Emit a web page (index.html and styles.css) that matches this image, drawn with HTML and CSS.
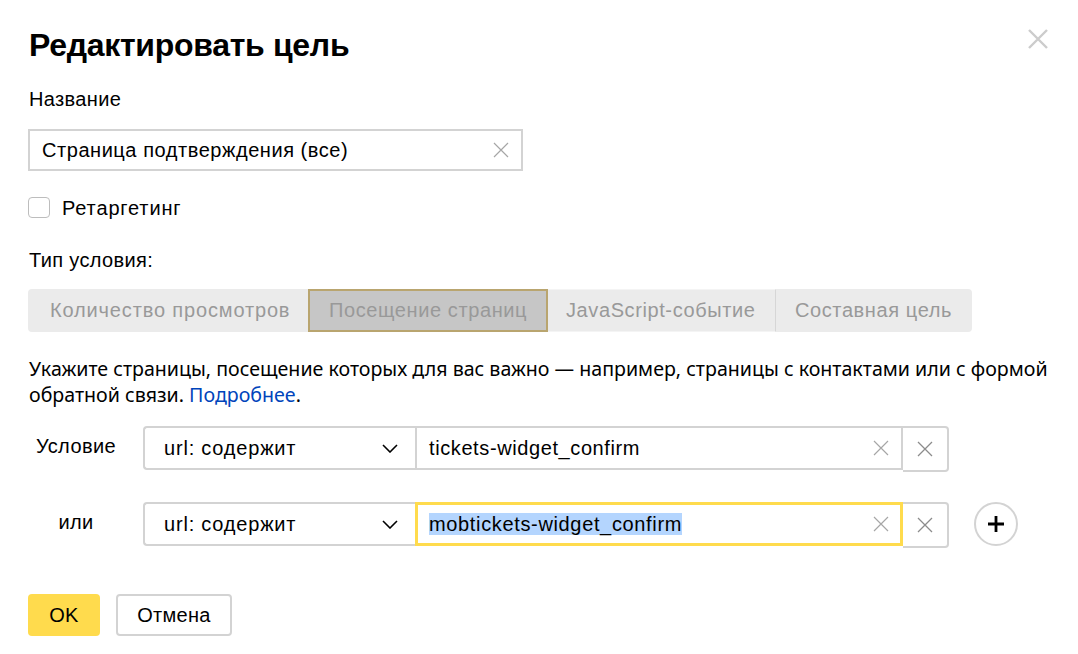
FILE: index.html
```
<!DOCTYPE html>
<html lang="ru">
<head>
<meta charset="utf-8">
<title>Редактировать цель</title>
<link rel="stylesheet" href="styles.css">
</head>
<body>
<div class="dialog">
  <div class="header">
    <h1 class="title">Редактировать цель</h1>
    <button class="close" aria-label="Закрыть">
      <svg width="20" height="20" viewBox="0 0 20 20"><path d="M1 1L19 19M19 1L1 19" stroke="#cccccc" stroke-width="2.4" fill="none"/></svg>
    </button>
  </div>

  <div class="label">Название</div>
  <div class="field name-field">
    <span class="field-text">Страница подтверждения (все)</span>
    <svg class="clear" width="16" height="16" viewBox="0 0 16 16"><path d="M1 1L15 15M15 1L1 15" stroke="#a6a6a6" stroke-width="1.2" fill="none"/></svg>
  </div>

  <label class="check-row">
    <span class="checkbox"></span>
    <span class="check-text">Ретаргетинг</span>
  </label>

  <div class="label type-label">Тип условия:</div>
  <div class="tabs">
    <div class="tab">Количество просмотров</div>
    <div class="tab tab-active">Посещение страниц</div>
    <div class="tab tab-js">JavaScript-событие</div>
    <div class="tab tab-last">Составная цель</div>
  </div>

  <p class="desc">Укажите страницы, посещение которых для вас важно — например, страницы с контактами или с формой<br>обратной связи. <a class="link" href="#">Подробнее</a>.</p>

  <div class="conditions">
    <div class="cond-row">
      <div class="cond-label">Условие</div>
      <div class="select">
        <span>url: содержит</span>
        <svg class="chevron" width="16" height="9" viewBox="0 0 16 9"><path d="M1 1L8 8L15 1" stroke="#000" stroke-width="1.6" fill="none"/></svg>
      </div>
      <div class="field url-field">
        <span class="field-text">tickets-widget_confirm</span>
        <svg class="clear" width="16" height="16" viewBox="0 0 16 16"><path d="M1 1L15 15M15 1L1 15" stroke="#a6a6a6" stroke-width="1.2" fill="none"/></svg>
      </div>
      <button class="remove" aria-label="Удалить">
        <svg width="16" height="16" viewBox="0 0 16 16"><path d="M1 1L15 15M15 1L1 15" stroke="#8c8c8c" stroke-width="1.3" fill="none"/></svg>
      </button>
    </div>
    <div class="cond-row">
      <div class="cond-label">или</div>
      <div class="select">
        <span>url: содержит</span>
        <svg class="chevron" width="16" height="9" viewBox="0 0 16 9"><path d="M1 1L8 8L15 1" stroke="#000" stroke-width="1.6" fill="none"/></svg>
      </div>
      <div class="field url-field focused">
        <span class="field-text"><span class="selected">mobtickets-widget_confirm</span></span>
        <svg class="clear" width="16" height="16" viewBox="0 0 16 16"><path d="M1 1L15 15M15 1L1 15" stroke="#a6a6a6" stroke-width="1.2" fill="none"/></svg>
      </div>
      <button class="remove" aria-label="Удалить">
        <svg width="16" height="16" viewBox="0 0 16 16"><path d="M1 1L15 15M15 1L1 15" stroke="#8c8c8c" stroke-width="1.3" fill="none"/></svg>
      </button>
      <button class="add" aria-label="Добавить">
        <svg width="18" height="18" viewBox="0 0 18 18"><path d="M9 1V17M1 9H17" stroke="#000" stroke-width="2.8" fill="none"/></svg>
      </button>
    </div>
  </div>

  <div class="actions">
    <button class="btn btn-ok">OK</button>
    <button class="btn btn-cancel">Отмена</button>
  </div>
</div>
</body>
</html>
```
FILE: styles.css
```
* { box-sizing: border-box; }
html, body { margin: 0; padding: 0; background: #fff; }
body {
  font-family: "Liberation Sans", Arial, sans-serif;
  color: #000;
  width: 1078px;
  height: 654px;
  overflow: hidden;
}
button { font-family: inherit; }

.dialog { padding: 0 28px 0 28px; }

.header {
  display: flex;
  justify-content: space-between;
  align-items: flex-start;
  margin-top: 26px;
  height: 38px;
}
.title {
  margin: 0 0 0 1px;
  font-size: 32px;
  line-height: 38px;
  font-weight: bold;
  letter-spacing: -0.3px;
}
.close {
  border: 0;
  background: none;
  padding: 0;
  width: 20px;
  height: 20px;
  margin: 3px 2px 0 0;
  display: flex;
}

.label {
  font-size: 20px;
  line-height: 24px;
  margin-top: 23px;
  padding-left: 1px;
  letter-spacing: 0.35px;
}

.field {
  display: flex;
  align-items: center;
  justify-content: space-between;
  height: 42px;
  border: 2px solid #d3d3d3;
  background: #fff;
  font-size: 20px;
  letter-spacing: 0.55px;
}
.field-text { white-space: nowrap; }
.name-field {
  width: 495px;
  margin-top: 18px;
  padding: 0 12px 0 12px;
}
.clear { flex: none; }

.check-row {
  display: flex;
  align-items: center;
  gap: 12px;
  margin-top: 25px;
  height: 22px;
}
.checkbox {
  width: 22px;
  height: 21px;
  border: 1.5px solid #bdbdbd;
  border-radius: 4px;
  background: #fff;
}
.check-text { font-size: 20px; letter-spacing: 0.85px; padding-top: 2px; }

.type-label { margin-top: 30px; }

.tabs {
  display: flex;
  width: 944px;
  height: 43px;
  margin-top: 17px;
  background: #ebebeb;
  border-radius: 4px;
}
.tab {
  display: flex;
  align-items: center;
  padding: 0 20px;
  font-size: 20px;
  letter-spacing: 0.6px;
  color: #999;
  white-space: nowrap;
}
.tab:first-child { width: 280px; padding-left: 22px; letter-spacing: 0.85px; }
.tab-active {
  width: 240px;
  background: #c6c6c6;
  border: 2px solid #b9a56f;
  padding-left: 19px;
}
.tab-js {
  width: 228px;
  padding-left: 18px;
  border-top: 1px solid #f4f4f4;
  border-bottom: 1px solid #f4f4f4;
  border-right: 1px solid #d6d6d6;
}
.tab-last { flex: 1; padding-left: 19px; }

.desc {
  margin: 24px 0 0 1px;
  font-family: "Noto Sans", "Open Sans", sans-serif;
  font-size: 19.6px;
  line-height: 26px;
  white-space: nowrap;
}
.link { color: #0044bb; text-decoration: none; }

.conditions {
  display: flex;
  flex-direction: column;
  gap: 32px;
  margin-top: 18px;
}
.cond-row {
  display: flex;
  align-items: center;
  height: 44px;
}
.cond-label {
  width: 96px;
  text-align: center;
  font-size: 20px;
  letter-spacing: 0.4px;
  margin-right: 19px;
  margin-top: -4px;
}
.select {
  display: flex;
  align-items: center;
  justify-content: space-between;
  width: 272px;
  height: 44px;
  border: 2px solid #d3d3d3;
  border-right: 0;
  border-radius: 4px 0 0 4px;
  padding: 0 17px 0 19px;
  font-size: 20px;
  letter-spacing: 0.8px;
}
.chevron { margin-top: 1px; }
.url-field {
  width: 488px;
  height: 44px;
  padding: 0 12px 0 12px;
  letter-spacing: 0.6px;
}
.url-field.focused {
  border: 3px solid #ffdb4d;
  padding: 0 11px 0 11px;
  letter-spacing: 0.65px;
}
.selected { background: #b4d5fe; }
.remove {
  width: 46px;
  height: 46px;
  margin-top: 2px;
  border: 2px solid #d3d3d3;
  border-left: 0;
  border-radius: 0 4px 4px 0;
  background: #fff;
  display: flex;
  align-items: center;
  justify-content: center;
  padding: 0;
}
.add {
  width: 44px;
  height: 44px;
  margin-left: 25px;
  border: 2px solid #d3d3d3;
  border-radius: 50%;
  background: #fff;
  display: flex;
  align-items: center;
  justify-content: center;
  padding: 0;
}

.actions {
  display: flex;
  gap: 16px;
  margin-top: 48px;
}
.btn {
  height: 42px;
  border-radius: 4px;
  font-size: 20px;
  letter-spacing: 0.3px;
  color: #000;
  padding: 0;
}
.btn-ok {
  width: 72px;
  background: #ffdb4d;
  border: 0;
}
.btn-cancel {
  width: 116px;
  background: #fff;
  border: 2px solid #d3d3d3;
}
```
